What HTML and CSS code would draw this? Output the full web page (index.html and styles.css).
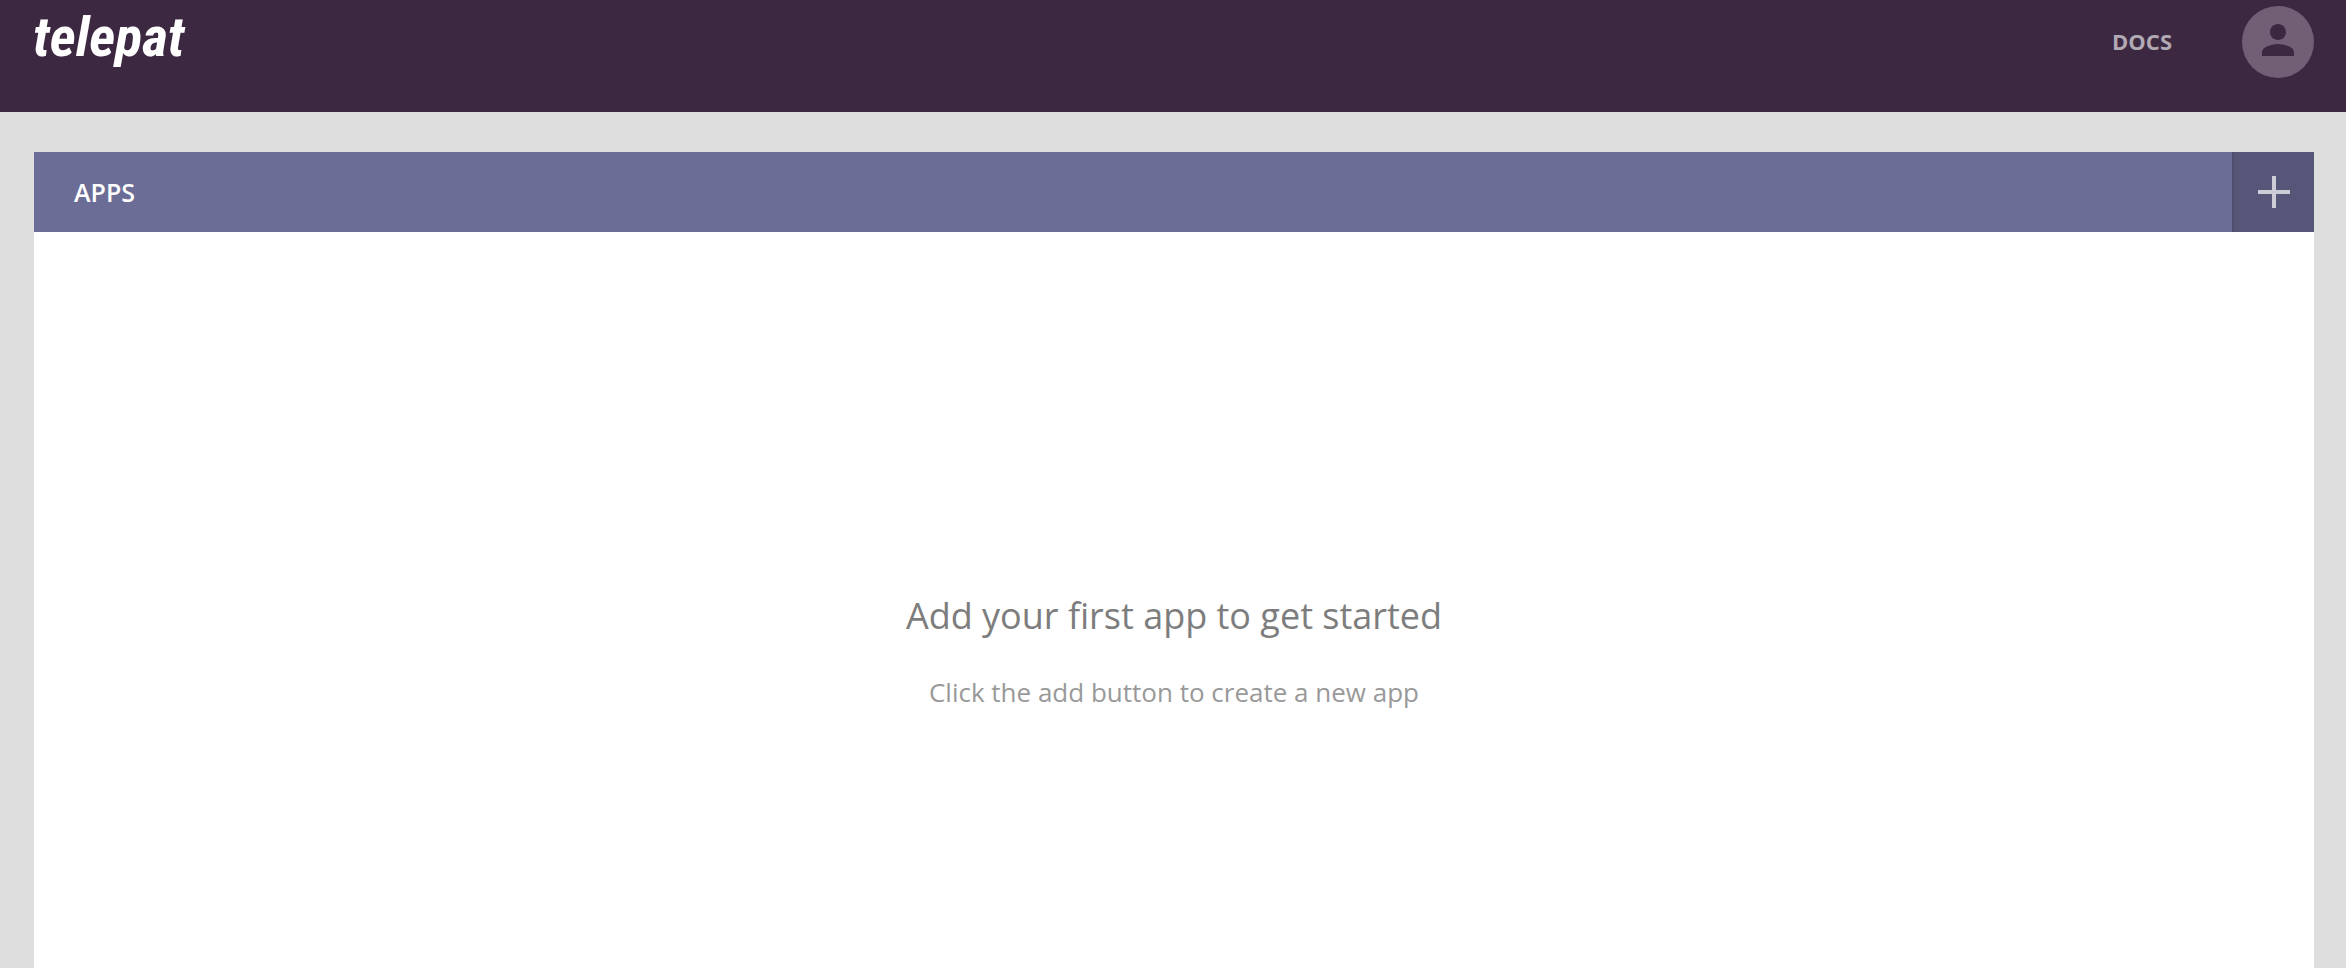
FILE: index.html
```html
<!DOCTYPE html>
<html lang="en">
<head>
<meta charset="utf-8">
<title>Telepat</title>
<link rel="stylesheet" href="styles.css">
</head>
<body>
<header class="topbar">
  <a class="logo" href="#">telepat</a>
  <nav class="nav">
    <a class="docs" href="#">DOCS</a>
    <button class="avatar" type="button" aria-label="Account">
      <svg viewBox="0 0 24 24" aria-hidden="true"><path d="M12 12c2.21 0 4-1.79 4-4s-1.79-4-4-4-4 1.79-4 4 1.79 4 4 4zm0 2c-2.67 0-8 1.34-8 4v2h16v-2c0-2.66-5.33-4-8-4z"/></svg>
    </button>
  </nav>
</header>
<main class="panel">
  <div class="panel-head">
    <h1 class="panel-title">APPS</h1>
    <button class="add" type="button" aria-label="Add app">
      <svg viewBox="0 0 32 32" aria-hidden="true"><path d="M14 0h4v14h14v4H18v14h-4V18H0v-4h14z"/></svg>
    </button>
  </div>
  <section class="empty">
    <h2 class="empty-title">Add your first app to get started</h2>
    <p class="empty-text">Click the add button to create a new app</p>
  </section>
</main>
</body>
</html>
```
FILE: styles.css
```css
* { box-sizing: border-box; }
body {
  margin: 0;
  min-height: 100vh;
  display: flex;
  flex-direction: column;
  background: #dedede;
  font-family: "Open Sans", "Noto Sans", sans-serif;
}
h1, h2, p { margin: 0; }
button { border: 0; padding: 0; cursor: pointer; }
svg { display: block; }
.topbar {
  display: flex;
  justify-content: space-between;
  align-items: flex-start;
  height: 112px;
  padding: 6px 32px 0 33px;
  background: #3d2842;
}
.logo {
  color: #fff;
  font: italic bold 56px/62px "Roboto Condensed", "Liberation Sans Narrow", "Liberation Sans", sans-serif;
  text-decoration: none;
}
.nav { display: flex; align-items: center; gap: 70px; }
.docs {
  padding-bottom: 2px;
  color: #b1a9b3;
  font-size: 22px;
  font-weight: 700;
  text-decoration: none;
}
.avatar {
  display: grid;
  place-items: center;
  width: 72px;
  height: 72px;
  padding-bottom: 4px;
  border-radius: 50%;
  background: #715f76;
}
.avatar svg { width: 48px; height: 48px; fill: #3d2842; }
.panel {
  flex: 1;
  display: flex;
  flex-direction: column;
  margin: 40px 32px 0 34px;
  background: #fff;
}
.panel-head {
  display: flex;
  justify-content: space-between;
  height: 80px;
  background: #6c6d96;
}
.panel-title {
  padding-left: 40px;
  color: #fff;
  font-size: 25px;
  font-weight: 600;
  line-height: 80px;
}
.add {
  display: grid;
  place-items: center;
  width: 82px;
  border-left: 2px solid #4f4f6d;
  background: #565778;
}
.add svg { width: 32px; height: 32px; fill: #ccccd6; }
.empty { padding-top: 358px; text-align: center; }
.empty-title {
  color: #7d7d7d;
  font-size: 36px;
  font-weight: 400;
  line-height: 52px;
}
.empty-text {
  margin-top: 30px;
  color: #999;
  font-size: 26px;
  line-height: 40px;
}
```
